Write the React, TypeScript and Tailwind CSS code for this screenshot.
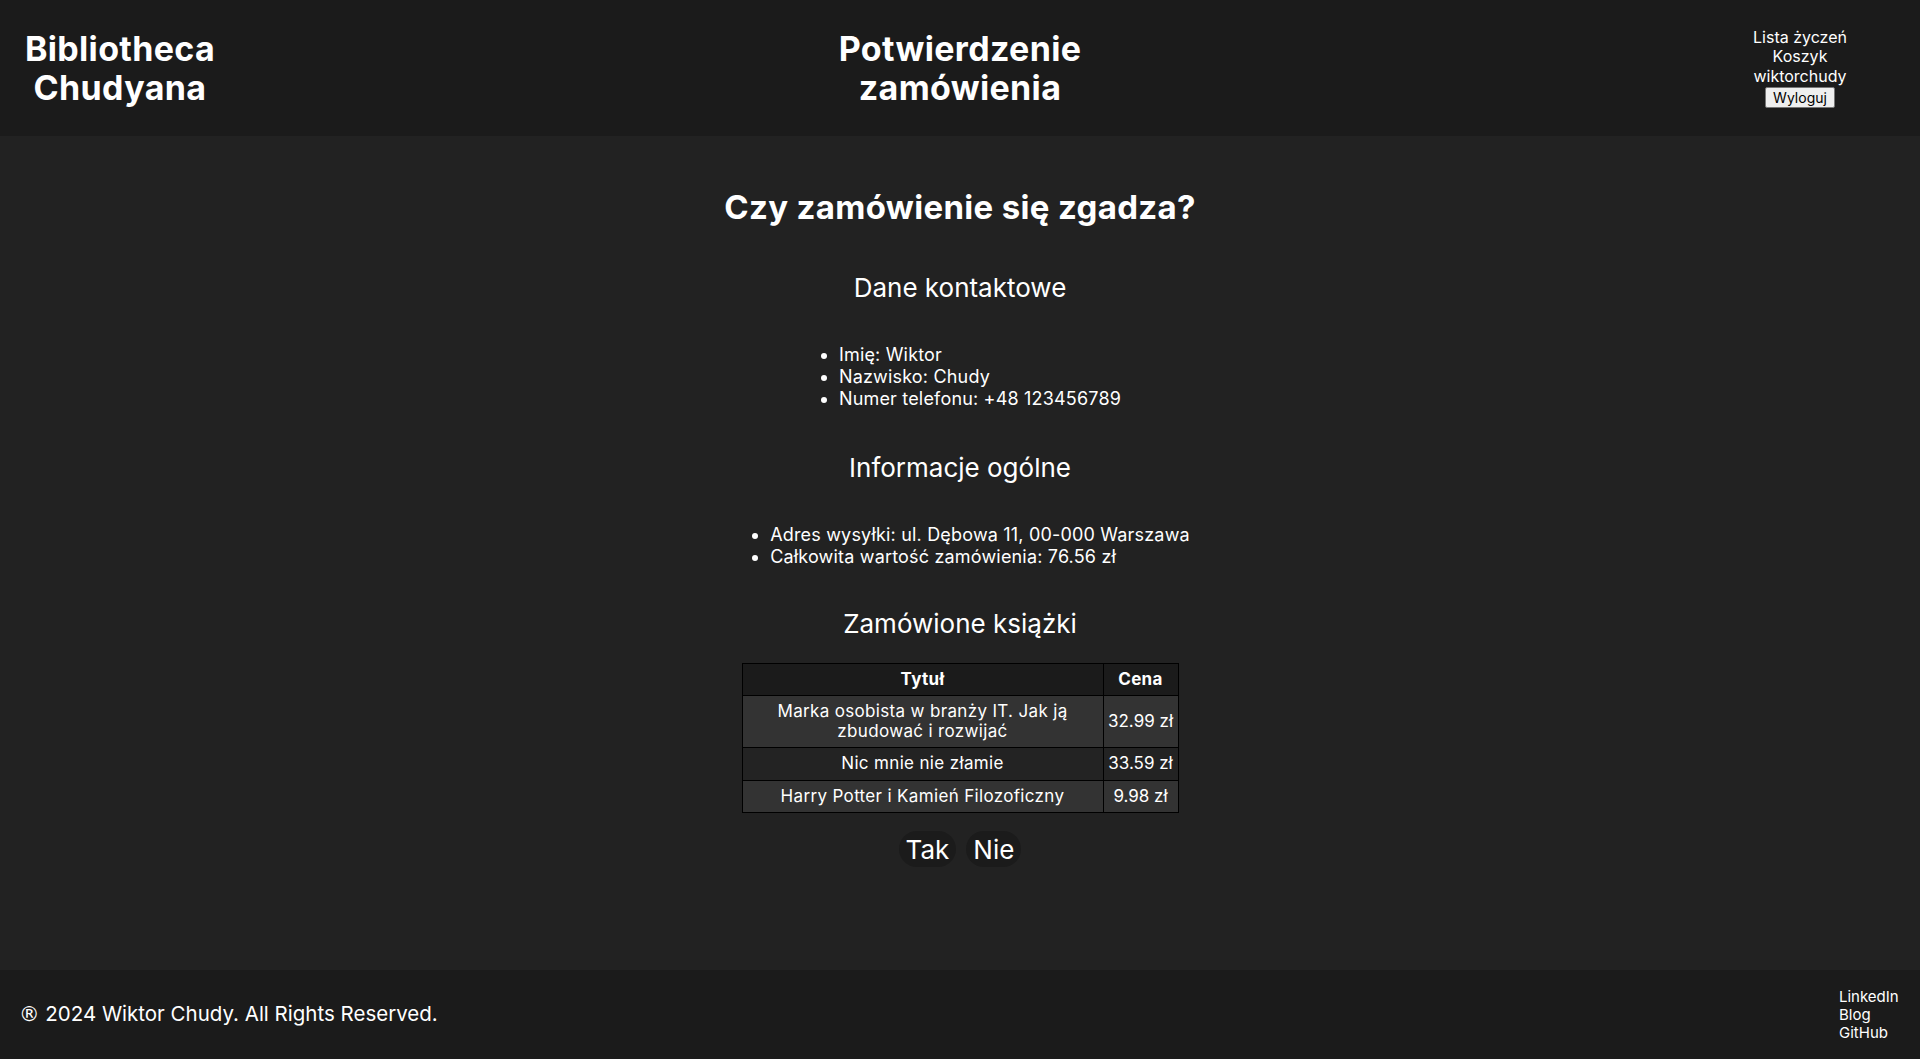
const books = [
  { title: "Marka osobista w branży IT. Jak ją zbudować i rozwijać", price: "32.99 zł" },
  { title: "Nic mnie nie złamie", price: "33.59 zł" },
  { title: "Harry Potter i Kamień Filozoficzny", price: "9.98 zł" },
];

const Header = () => (
  <header className="grid h-[136px] grid-cols-[240px_1fr_240px] items-center bg-[#1b1b1b] text-center text-white">
    <h1 className="text-[34px] font-bold leading-[39px] tracking-[0.01em]">
      Bibliotheca
      <br />
      Chudyana
    </h1>
    <h1 className="text-[34px] font-bold leading-[39px] tracking-[0.01em]">
      Potwierdzenie
      <br />
      zamówienia
    </h1>
    <nav className="flex flex-col items-center text-[16px] leading-[19.5px]">
      <a>Lista życzeń</a>
      <a>Koszyk</a>
      <span>wiktorchudy</span>
      <button className="mt-[1px] h-[21px] rounded-[2px] border border-[#767676] bg-[#efefef] px-[7px] text-[14px] leading-[17px] text-black">
        Wyloguj
      </button>
    </nav>
  </header>
);

const Section = ({ title, items, gap }: { title: string; items: string[]; gap: string }) => (
  <>
    <h2 className={`${gap} text-[26px] font-normal leading-[29px]`}>{title}</h2>
    <ul className="mt-[42px] list-disc pl-[40px] text-left text-[18px] leading-[22px] tracking-[0.01em]">
      {items.map((item) => (
        <li key={item}>{item}</li>
      ))}
    </ul>
  </>
);

const App = () => {
  return (
    <div
      className="flex min-h-screen flex-col bg-[#222222] text-white"
      style={{ fontFamily: "Inter, 'Noto Sans', sans-serif" }}
    >
      <Header />

      <main className="flex flex-1 flex-col items-center pt-[52px] text-center">
        <h1 className="text-[33px] font-bold leading-[39px] tracking-[0.01em]">Czy zamówienie się zgadza?</h1>

        <Section
          gap="mt-[46px]"
          title="Dane kontaktowe"
          items={["Imię: Wiktor", "Nazwisko: Chudy", "Numer telefonu: +48 123456789"]}
        />
        <Section
          gap="mt-[43px]"
          title="Informacje ogólne"
          items={[
            "Adres wysyłki: ul. Dębowa 11, 00-000 Warszawa",
            "Całkowita wartość zamówienia: 76.56 zł",
          ]}
        />

        <h2 className="mt-[41px] text-[26px] font-normal leading-[29px]">Zamówione książki</h2>
        <table className="mt-[25px] w-[436px] table-fixed border-collapse text-[17px] leading-[19.5px] tracking-[0.02em]">
          <colgroup>
            <col className="w-[361px]" />
            <col className="w-[75px]" />
          </colgroup>
          <thead>
            <tr className="bg-[#1b1b1b]">
              <th className="h-[32px] border border-black px-[5px] font-bold">Tytuł</th>
              <th className="h-[32px] border border-black px-[5px] font-bold">Cena</th>
            </tr>
          </thead>
          <tbody>
            {books.map((book, i) => (
              <tr key={book.title} className={i % 2 === 0 ? "bg-[#333333]" : "bg-[#232323]"}>
                <td className="h-[32px] border border-black px-[20px] py-[6px]">{book.title}</td>
                <td className="h-[32px] border border-black px-[2px] py-[6px] tracking-normal">{book.price}</td>
              </tr>
            ))}
          </tbody>
        </table>

        <div className="mt-[18px] flex gap-[10px]">
          <button className="h-[36px] rounded-full bg-[#1b1b1b] px-[7px] text-[26px] leading-[29px] text-white">
            Tak
          </button>
          <button className="h-[36px] rounded-full bg-[#1b1b1b] px-[7px] text-[26px] leading-[29px] text-white">
            Nie
          </button>
        </div>
        <div className="h-[100px]" />
      </main>

      <footer className="flex h-[89px] items-center justify-between bg-[#1b1b1b] pl-[19px] pr-[20px]">
        <p className="text-[20.5px]">
          <span style={{ fontFamily: "'DejaVu Sans', sans-serif" }}>®</span> 2024 Wiktor Chudy. All Rights Reserved.
        </p>
        <div className="flex w-[61px] flex-col text-[15px] leading-[18px]">
          <a>LinkedIn</a>
          <a>Blog</a>
          <a>GitHub</a>
        </div>
      </footer>
    </div>
  );
};

export default App;
